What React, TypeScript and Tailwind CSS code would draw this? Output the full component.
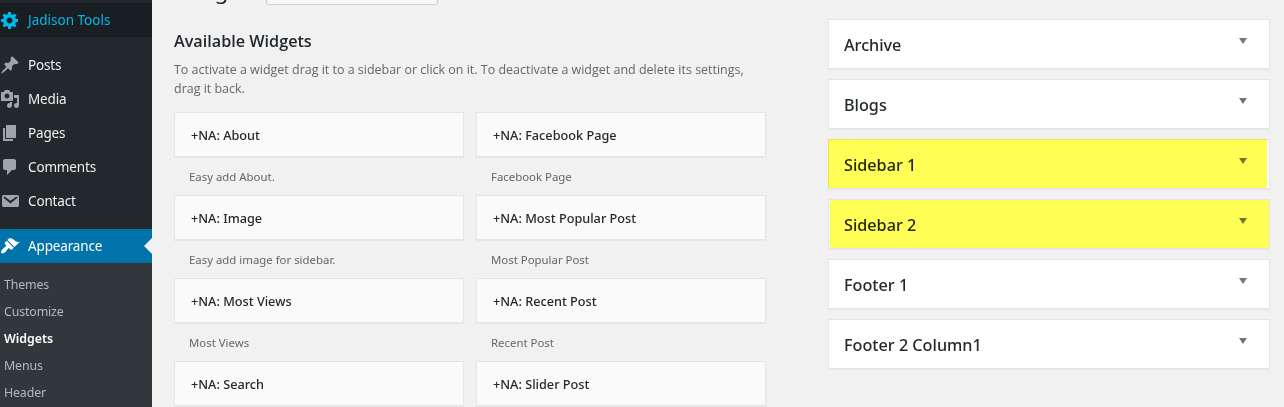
import React from "react";

const icons = {
  gear: "M18 12h-2.18c-.17.7-.44 1.35-.81 1.93l1.54 1.54-2.1 2.1-1.54-1.54c-.58.36-1.23.63-1.91.79V19H8v-2.18c-.68-.16-1.33-.43-1.91-.79l-1.54 1.54-2.12-2.12 1.54-1.54c-.36-.58-.63-1.23-.79-1.91H1V9.03h2.17c.16-.7.44-1.35.8-1.94L2.43 5.55l2.1-2.1 1.54 1.54c.58-.37 1.24-.64 1.93-.81V2h3v2.18c.68.16 1.33.43 1.91.79l1.54-1.54 2.12 2.12-1.54 1.54c.36.59.64 1.24.8 1.94H18V12zm-8.5 1.5c1.66 0 3-1.34 3-3s-1.34-3-3-3-3 1.34-3 3 1.34 3 3 3z",
  pin: "M10.44 3.02l1.82-1.82 6.36 6.35-1.83 1.82c-1.05-.68-2.48-.57-3.41.36l-.75.75c-.92.93-1.04 2.35-.35 3.41l-1.83 1.82-2.41-2.41-2.8 2.79c-.42.42-3.38 2.71-3.8 2.29s1.86-3.39 2.28-3.81l2.79-2.79L4.1 9.36l1.83-1.82c1.05.69 2.48.57 3.4-.36l.75-.75c.93-.92 1.05-2.35.36-3.41z",
  media: "M13 11V4c0-.55-.45-1-1-1h-1.67L9 1H5L3.67 3H2c-.55 0-1 .45-1 1v7c0 .55.45 1 1 1h10c.55 0 1-.45 1-1zM7 4.5c1.38 0 2.5 1.12 2.5 2.5S8.38 9.5 7 9.5 4.5 8.38 4.5 7 5.62 4.5 7 4.5zM14 6h5v10.5c0 1.38-1.12 2.5-2.5 2.5S14 17.88 14 16.5s1.12-2.5 2.5-2.5c.17 0 .34.02.5.05V9h-3V6zm-4 8.05V13h2v3.5c0 1.38-1.12 2.5-2.5 2.5S7 17.88 7 16.5 8.12 14 9.5 14c.17 0 .34.02.5.05z",
  pages: "M6 15V2h10v13H6zm-1 1h8v2H3V5h2v11z",
  comment: "M5 2h9c1.1 0 2 .9 2 2v7c0 1.1-.9 2-2 2h-2l-5 5v-5H5c-1.1 0-2-.9-2-2V4c0-1.1.9-2 2-2z",
  mail: "M3.87 4h13.25C18.37 4 19 4.59 19 5.79v8.42c0 1.19-.63 1.79-1.88 1.79H3.87c-1.25 0-1.88-.6-1.88-1.79V5.79c0-1.2.63-1.79 1.88-1.79zm6.62 8.6l6.74-5.53c.24-.2.43-.66.13-1.07-.29-.41-.82-.42-1.17-.17l-5.7 3.86L4.8 5.83c-.35-.25-.88-.24-1.17.17-.3.41-.11.87.13 1.07z",
  brush: "M14.48 11.06L7.41 3.99l1.5-1.5c.5-.56 2.3-.47 3.51.32 1.21.8 1.43 1.28 2.91 2.1 1.18.64 2.45 1.26 4.45.85zm-.71.71L6.7 4.7 4.93 6.47c-.39.39-.39 1.02 0 1.41l1.06 1.06c.39.39.39 1.03 0 1.42-.6.6-1.43 1.11-2.21 1.69-.35.26-.7.53-1.01.84C1.43 14.23.4 16.08 1.4 17.07c.99 1 2.84-.03 4.18-1.36.31-.31.58-.66.85-1.02.57-.78 1.08-1.61 1.69-2.21.39-.39 1.02-.39 1.41 0l1.06 1.06c.39.39 1.02.39 1.41 0z",
};

type IconName = keyof typeof icons;

function Icon({ name, className }: { name: IconName; className: string }) {
  return (
    <svg viewBox="0 0 20 20" className={`h-5 w-5 shrink-0 ${className}`} fill="currentColor">
      <path d={icons[name]} />
    </svg>
  );
}

function MenuItem({ icon, label, row = "text-[#eee]", tint = "text-[#a0a5aa]", children }: {
  icon: IconName; label: string; row?: string; tint?: string; children?: React.ReactNode;
}) {
  return (
    <div className={`relative flex h-[34px] shrink-0 items-center gap-2 text-[13.5px] ${row}`}>
      <Icon name={icon} className={tint} />
      <span>{label}</span>
      {children}
    </div>
  );
}

const menu: [IconName, string][] = [
  ["pin", "Posts"],
  ["media", "Media"],
  ["pages", "Pages"],
  ["comment", "Comments"],
  ["mail", "Contact"],
];

const submenu = ["Themes", "Customize", "Widgets", "Menus", "Header"];

const widgets: [string, string][] = [
  ["+NA: About", "Easy add About."],
  ["+NA: Facebook Page", "Facebook Page"],
  ["+NA: Image", "Easy add image for sidebar."],
  ["+NA: Most Popular Post", "Most Popular Post"],
  ["+NA: Most Views", "Most Views"],
  ["+NA: Recent Post", "Recent Post"],
  ["+NA: Search", ""],
  ["+NA: Slider Post", ""],
];

const areas: { name: string; mark?: "left" | "right" }[] = [
  { name: "Archive" },
  { name: "Blogs" },
  { name: "Sidebar 1", mark: "left" },
  { name: "Sidebar 2", mark: "right" },
  { name: "Footer 1" },
  { name: "Footer 2 Column1" },
];

function Area({ name, mark }: { name: string; mark?: "left" | "right" }) {
  return (
    <div className="relative flex h-[50px] shrink-0 justify-between border border-[#e5e5e5] bg-white pl-[15px] pr-[22.5px] shadow-[0_1px_1px_rgba(0,0,0,0.04)]">
      <span className="pt-[13px] text-[16.2px] font-medium leading-6 text-[#23282d]">{name}</span>
      <svg viewBox="0 0 8 6" className="mt-[18px] h-[6px] w-2" fill="#72777c">
        <path d="M0 0h8L4 6z" />
      </svg>
      {mark === "left" && <div className="absolute -top-px bottom-0 -left-px right-[2px] bg-[#ffff55] mix-blend-multiply" />}
      {mark === "right" && <div className="absolute top-0 bottom-0 left-[1px] right-0 bg-[#ffff55] mix-blend-multiply" />}
    </div>
  );
}

export default function App() {
  return (
    <div className="flex h-[407px] w-[1284px] overflow-hidden bg-[#f1f1f1] font-['Noto_Sans',sans-serif]">
      <nav className="flex w-[152px] shrink-0 flex-col bg-[#23282d] pt-[3px]">
        <MenuItem icon="gear" label="Jadison Tools" row="bg-[#191e23] text-[#00b9eb]" tint="text-[#00b9eb]" />
        <div className="mt-[11px] mb-[11px] flex flex-col tracking-[-0.15px]">
          {menu.map(([icon, label]) => (
            <MenuItem key={label} icon={icon} label={label} />
          ))}
        </div>
        <MenuItem icon="brush" label="Appearance" row="bg-[#0073aa] text-white tracking-[-0.15px]" tint="text-white">
          <div className="absolute top-[9px] right-0 border-y-8 border-r-8 border-y-transparent border-r-[#f1f1f1]" />
        </MenuItem>
        <div className="flex flex-1 flex-col bg-[#32373c] pt-2 pl-1">
          {submenu.map((label) => (
            <div
              key={label}
              className={
                label === "Widgets"
                  ? "h-[27px] shrink-0 text-[12.4px] font-semibold leading-[27px] text-white"
                  : "h-[27px] shrink-0 text-[12.4px] leading-[27px] tracking-[-0.15px] text-[#b4b9be]"
              }
            >
              {label}
            </div>
          ))}
        </div>
      </nav>

      <main className="ml-[22px] flex w-[592px] shrink-0 flex-col">
        <div className="flex h-[5px] shrink-0 items-end gap-3">
          <h1 className="-mb-px w-20 text-[22.5px] leading-[30px] text-[#23282d]">Widgets</h1>
          <div className="h-7 w-[172px] rounded-[3px] border border-[#ccc] bg-[#f7f7f7]" />
        </div>
        <h2 className="mt-6 h-6 shrink-0 font-['Open_Sans'] text-[16.2px] font-semibold leading-6 text-[#23282d]">Available Widgets</h2>
        <p className="mt-[7px] h-[38px] shrink-0 whitespace-nowrap font-['Open_Sans'] text-[12.47px] leading-[19px] text-[#666]">
          To activate a widget drag it to a sidebar or click on it. To deactivate a widget and delete its settings,
          <br />
          drag it back.
        </p>
        <div className="mt-[14px] grid grid-cols-[290px_290px] gap-x-3">
          {widgets.map(([title, text]) => (
            <div key={title} className="h-[83px]">
              <div className="h-[45px] border border-[#e5e5e5] bg-[#fafafa] pl-4 text-[12.7px] font-medium leading-[45px] text-[#23282d] shadow-[0_1px_1px_rgba(0,0,0,0.04)]">
                {title}
              </div>
              <div className="pt-[10px] pl-[15px] text-[11.4px] leading-[19px] text-[#666]">{text}</div>
            </div>
          ))}
        </div>
      </main>

      <section className="ml-[62px] flex w-[442px] shrink-0 flex-col gap-[10px] pt-[19px]">
        {areas.map((a) => (
          <Area key={a.name} {...a} />
        ))}
      </section>
    </div>
  );
}
